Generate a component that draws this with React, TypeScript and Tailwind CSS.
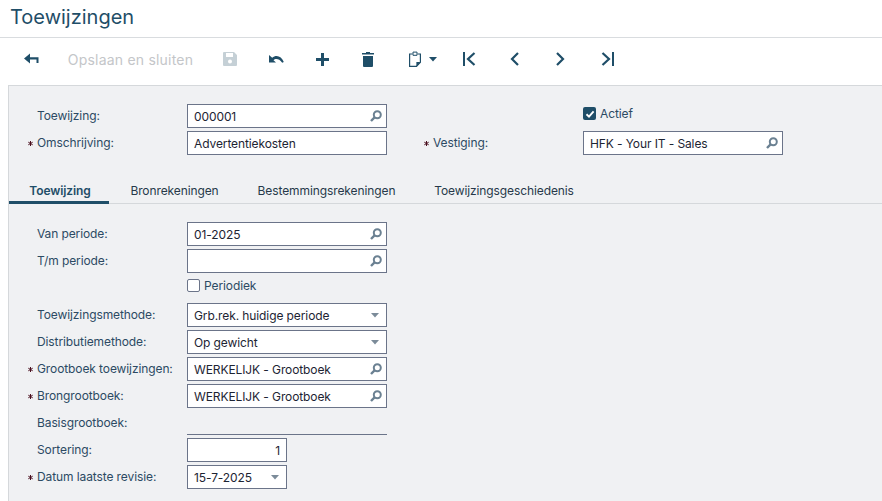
import React from "react";

const Search = () => (
  <svg viewBox="0 0 12 12" className="w-[12px] h-[12px] shrink-0">
    <circle cx="7.3" cy="4.7" r="3.5" fill="none" stroke="#6b8192" strokeWidth="2" />
    <path d="M4.8 7.2 1 11" stroke="#6b8192" strokeWidth="2.4" />
  </svg>
);

const Caret = ({ color = "#7b8b99" }: { color?: string }) => (
  <svg viewBox="0 0 8 5" className="w-[8px] h-[5px] shrink-0">
    <path d="M0 0h8L4 4.5z" fill={color} />
  </svg>
);

const Field = ({
  value = "",
  icon,
  narrow,
  right,
}: {
  value?: string;
  icon?: "search" | "caret";
  narrow?: boolean;
  right?: boolean;
}) => (
  <div
    className={`h-[24px] ${narrow ? "w-[100px]" : "w-[200px]"} bg-white border border-[#6b7489] flex items-center pl-[6px] pr-[4px] text-[12px] text-[#1d2433] tracking-[-0.1px]`}
  >
    <span className={`flex-1 pt-px ${right ? "text-right pr-[2px]" : ""}`}>{value}</span>
    {icon === "search" && <Search />}
    {icon === "caret" && (
      <span className="pr-[3px] flex">
        <Caret />
      </span>
    )}
  </div>
);

const Label = ({ text, req }: { text: string; req?: boolean }) => (
  <div className="w-[159px] shrink-0 flex items-center text-[12px] tracking-[-0.1px] text-[#2c4a63] pb-[1px]">
    <span className="w-[9px] shrink-0 flex items-center pt-px">
      {req && (
        <svg viewBox="0 0 5 5" className="w-[5px] h-[5px]">
          <path d="M2.5 0v5M.3 1.2l4.4 2.6M4.7 1.2.3 3.8" stroke="#4a0f1e" strokeWidth="1" fill="none" />
        </svg>
      )}
    </span>
    <span>{text}</span>
  </div>
);

const Row = ({ children }: { children: React.ReactNode }) => <div className="flex h-[24px]">{children}</div>;

const Btn = ({ children, w = "w-[46px]" }: { children: React.ReactNode; w?: string }) => (
  <div className={`${w} h-full flex items-center justify-center shrink-0`}>{children}</div>
);

const C = "#1f4e68";

export default function App() {
  return (
    <div
      className="h-[501px] w-[882px] overflow-hidden bg-white flex flex-col"
      style={{ fontFamily: "Inter, 'Liberation Sans', sans-serif" }}
    >
      <div className="h-[38px] shrink-0 border-b border-[#d9dcdf] pl-[10px] flex items-start">
        <h1 className="text-[20px] leading-[34px] text-[#1f4e68] font-normal">Toewijzingen</h1>
      </div>

      <div className="h-[47px] shrink-0 pl-[8px] flex items-center pb-[5px]">
        <Btn>
          <svg viewBox="0 0 15 12" className="w-[15px] h-[12px]">
            <path d="M0 5.5 6 .5v3.7h8.5V10h-2V6.5H6V10.5z" fill={C} />
          </svg>
        </Btn>
        <Btn w="w-[153px]">
          <span className="text-[14px] text-[#c4c6c9] tracking-[0.2px]">Opslaan en sluiten</span>
        </Btn>
        <Btn>
          <svg viewBox="0 0 14 14" className="w-[14px] h-[14px]">
            <path fillRule="evenodd" d="M0 1a1 1 0 0 1 1-1h10l3 3v10a1 1 0 0 1-1 1H1a1 1 0 0 1-1-1zM3 1v4h7V1zM7 7.5a2 2 0 1 0 0 4 2 2 0 0 0 0-4z" fill="#c5d0d6" />
          </svg>
        </Btn>
        <Btn>
          <svg viewBox="0 0 15 10" className="w-[15px] h-[10px]">
            <path d="M0 1v7.5h7L4.5 6.2C6 4.8 9.8 3.9 13.2 8.8l1.6-.8C12.6 2 7 .3 3.2 3.8z" fill={C} />
          </svg>
        </Btn>
        <Btn>
          <svg viewBox="0 0 13 13" className="w-[13px] h-[13px]">
            <path d="M5 0h3v5h5v3H8v5H5V8H0V5h5z" fill={C} />
          </svg>
        </Btn>
        <Btn>
          <svg viewBox="0 0 12 15" className="w-[12px] h-[15px]">
            <path d="M4 0h4v1h4v1.6H0V1h4zM1 4h10v10a1 1 0 0 1-1 1H2a1 1 0 0 1-1-1z" fill={C} />
          </svg>
        </Btn>
        <Btn w="w-[55px] justify-start pl-[18px] gap-[8px]">
          <svg viewBox="0 0 12 16" className="w-[12px] h-[16px]">
            <path d="M3.5 3H.6v12.4h6.9l3.9-4.2V3H8.5" fill="none" stroke={C} strokeWidth="1.2" />
            <path d="M4 1.1h4v3.2H4z" fill="none" stroke={C} strokeWidth="1" />
            <path d="M7.4 15.4 11.4 11H7.4z" fill={C} />
          </svg>
          <Caret color={C} />
        </Btn>
        <Btn>
          <svg viewBox="0 0 13 14" className="w-[13px] h-[14px]">
            <path d="M1 0v14" stroke={C} strokeWidth="2" />
            <path d="M11.5 1 5 7l6.5 6" fill="none" stroke={C} strokeWidth="2.2" />
          </svg>
        </Btn>
        <Btn w="w-[44px]">
          <svg viewBox="0 0 9 14" className="w-[9px] h-[14px]">
            <path d="M8 1 2 7l6 6" fill="none" stroke={C} strokeWidth="2.2" />
          </svg>
        </Btn>
        <Btn w="w-[49px]">
          <svg viewBox="0 0 9 14" className="w-[9px] h-[14px]">
            <path d="M1 1l6 6-6 6" fill="none" stroke={C} strokeWidth="2.2" />
          </svg>
        </Btn>
        <Btn w="w-[44px]">
          <svg viewBox="0 0 13 14" className="w-[13px] h-[14px]">
            <path d="M12 0v14" stroke={C} strokeWidth="2" />
            <path d="M1.5 1 8 7l-6.5 6" fill="none" stroke={C} strokeWidth="2.2" />
          </svg>
        </Btn>
      </div>

      <div className="flex-1 ml-[8px] bg-[#f0f1f3] border-l border-t border-[#d5d8db] flex flex-col">
        <div className="flex pt-[18px] pl-[19px]">
          <div className="flex flex-col gap-[3px] w-[396px] shrink-0">
            <Row>
              <Label text="Toewijzing:" />
              <Field value="000001" icon="search" />
            </Row>
            <Row>
              <Label text="Omschrijving:" req />
              <Field value="Advertentiekosten" />
            </Row>
          </div>
          <div className="flex flex-col gap-[3px]">
            <Row>
              <div className="w-[159px] shrink-0" />
              <div className="flex items-center gap-[4px] text-[12px] tracking-[-0.1px] text-[#2c4a63] pb-[5px]">
                <span className="w-[13px] h-[13px] rounded-[2px] bg-[#1f4e68] flex items-center justify-center">
                  <svg viewBox="0 0 10 10" className="w-[10px] h-[10px]">
                    <path d="M1.5 5.2 4 7.6 8.6 2.4" fill="none" stroke="#fff" strokeWidth="1.9" />
                  </svg>
                </span>
                <span>Actief</span>
              </div>
            </Row>
            <Row>
              <Label text="Vestiging:" req />
              <Field value="HFK - Your IT - Sales" icon="search" />
            </Row>
          </div>
        </div>

        <div className="mt-[21px] h-[28px] border-b border-[#d5d8db] flex text-[12px] text-[#27394a] tracking-[-0.1px]">
          <div className="w-[100px] h-[28px] border-b-[3px] border-[#1f4e68] flex items-center justify-center font-semibold text-[#1f4e68] pt-[4px] pl-[2px]">
            Toewijzing
          </div>
          <div className="w-[129px] flex items-center justify-center pt-[2px] pl-[2px]">Bronrekeningen</div>
          <div className="w-[177px] flex items-center justify-center pt-[2px]">Bestemmingsrekeningen</div>
          <div className="w-[178px] flex items-center justify-center pt-[2px]">Toewijzingsgeschiedenis</div>
        </div>

        <div className="pt-[18px] pl-[19px] flex flex-col gap-[3px]">
          <Row>
            <Label text="Van periode:" />
            <Field value="01-2025" icon="search" />
          </Row>
          <Row>
            <Label text="T/m periode:" />
            <Field icon="search" />
          </Row>
          <div className="flex h-[24px] pt-[3px]">
            <div className="w-[159px] shrink-0" />
            <div className="flex items-start gap-[4px] text-[12px] tracking-[-0.1px] text-[#2c4a63] leading-[13px]">
              <span className="w-[13px] h-[13px] rounded-[2px] bg-white border border-[#6b7489]" />
              <span>Periodiek</span>
            </div>
          </div>
          <Row>
            <Label text="Toewijzingsmethode:" />
            <Field value="Grb.rek. huidige periode" icon="caret" />
          </Row>
          <Row>
            <Label text="Distributiemethode:" />
            <Field value="Op gewicht" icon="caret" />
          </Row>
          <Row>
            <Label text="Grootboek toewijzingen:" req />
            <Field value="WERKELIJK - Grootboek" icon="search" />
          </Row>
          <Row>
            <Label text="Brongrootboek:" req />
            <Field value="WERKELIJK - Grootboek" icon="search" />
          </Row>
          <Row>
            <Label text="Basisgrootboek:" />
            <div className="w-[200px] h-[24px] border-b border-[#6b7489]" />
          </Row>
          <Row>
            <Label text="Sortering:" />
            <Field value="1" narrow right />
          </Row>
          <Row>
            <Label text="Datum laatste revisie:" req />
            <Field value="15-7-2025" icon="caret" narrow />
          </Row>
        </div>
      </div>
    </div>
  );
}
